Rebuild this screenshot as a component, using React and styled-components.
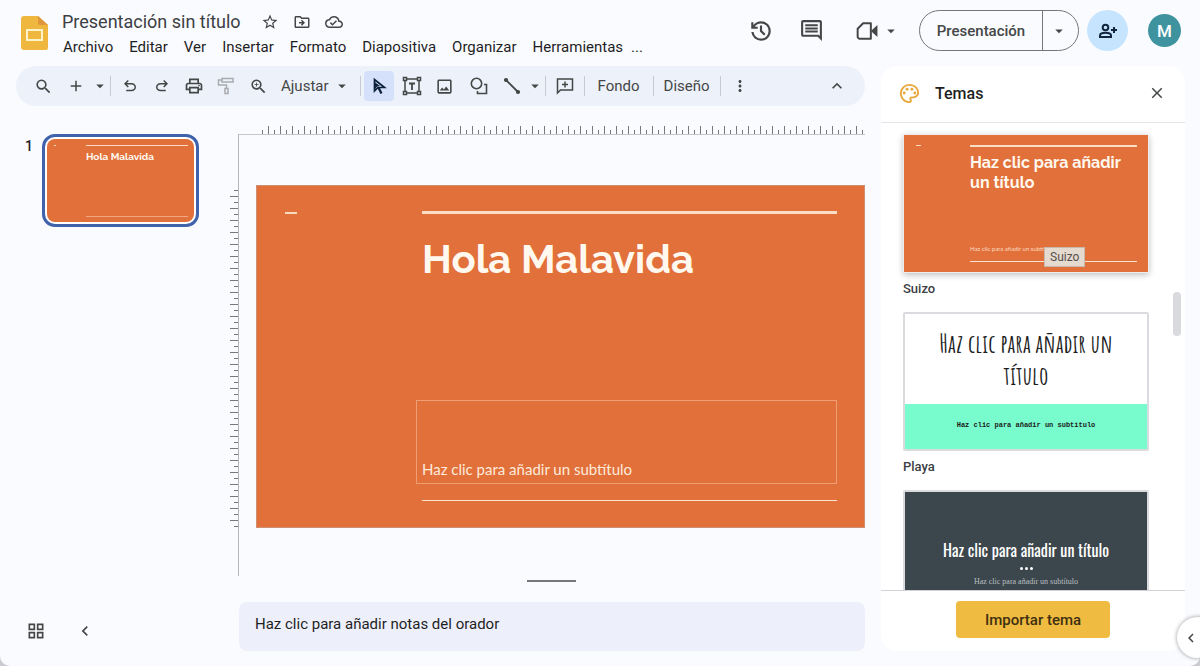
import React from 'react';
import styled, { createGlobalStyle, css } from 'styled-components';
import {
  MdSearch,
  MdAdd,
  MdArrowDropDown,
  MdOutlinePrint,
  MdZoomIn,
  MdOutlineImage,
  MdExpandLess,
  MdMoreVert,
  MdStarBorder,
  MdOutlineDriveFileMove,
  MdOutlineCloudDone,
  MdOutlineComment,
  MdOutlinePalette,
  MdClose,
  MdChevronLeft,
  MdOutlineGridView
} from 'react-icons/md';

const GlobalStyle = createGlobalStyle`
  * {
    box-sizing: border-box;
  }

  body {
    margin: 0;
    background: #c9cbd0;
    color: #1f1f1f;
    font-family: Roboto, 'Liberation Sans', sans-serif;
    overflow: hidden;
  }

  button {
    padding: 0;
    border: 0;
    background: none;
    color: inherit;
    font: inherit;
    cursor: pointer;
  }

  svg {
    display: block;
    flex: none;
  }
`;

const Window = styled.div`
  position: relative;
  height: 100vh;
  display: flex;
  flex-direction: column;
  background: #fafbff;
  border-radius: 0 0 10px 10px;
  overflow: hidden;
`;

/* header */

const Header = styled.header`
  height: 66px;
  flex: none;
  display: flex;
  justify-content: space-between;
  padding: 10px 19px 0 21px;
`;

const Brand = styled.div`
  display: flex;
  align-items: flex-start;
  gap: 14px;
`;

const Logo = styled.a`
  margin-top: 5px;
`;

const TitleRow = styled.div`
  height: 24px;
  display: flex;
  align-items: center;
`;

const DocTitle = styled.h1`
  margin: 0 20px 0 0;
  font-size: 18px;
  font-weight: 400;
  line-height: 24px;
  color: #3c4043;
`;

const TitleAction = styled.button`
  width: 18px;
  height: 18px;
  margin-right: 14px;
  display: flex;
  align-items: center;
  justify-content: center;
  color: #444746;
`;

const Menu = styled.nav`
  display: flex;
  gap: 16px;
  padding-left: 1px;
`;

const MenuItem = styled.button`
  height: 26px;
  font-size: 15px;
  white-space: nowrap;

  &:last-child {
    margin-left: -8px;
  }
`;

const HeaderTools = styled.div`
  height: 41px;
  display: flex;
  align-items: center;
`;

const HeaderIcon = styled.button`
  width: ${({ $width }) => $width || 50}px;
  height: 40px;
  margin-left: ${({ $gap }) => $gap || 0}px;
  display: flex;
  align-items: center;
  justify-content: center;
  color: #444746;
`;

const PresentGroup = styled.div`
  height: 41px;
  margin-left: 18px;
  display: flex;
  border: 1px solid #747775;
  border-radius: 21px;
  color: #444746;
`;

const PresentButton = styled.button`
  width: 122px;
  font-size: 15px;
  font-weight: 500;
`;

const PresentMore = styled.button`
  width: 36px;
  padding-right: 3px;
  display: flex;
  align-items: center;
  justify-content: center;
  border-left: 1px solid #747775;
`;

const ShareButton = styled.button`
  width: 41px;
  height: 41px;
  margin: 0 20px 0 8px;
  display: flex;
  align-items: center;
  justify-content: center;
  border-radius: 50%;
  background: #c6e4fe;
  color: #12263d;
`;

const Avatar = styled.button`
  width: 33px;
  height: 33px;
  border-radius: 50%;
  background: #3f939f;
  color: #fff;
  font-size: 17px;
  font-weight: 500;
`;

/* body */

const Body = styled.div`
  flex: 1;
  min-height: 0;
  display: flex;
  gap: 16px;
  padding: 0 15px 15px 0;
`;

const Editor = styled.main`
  flex: 1;
  min-width: 0;
  display: flex;
  flex-direction: column;
`;

const Toolbar = styled.div`
  height: 40px;
  flex: none;
  margin-left: 16px;
  padding: 0 12px 0 11px;
  display: flex;
  align-items: center;
  border-radius: 20px;
  background: #edf1fa;
  color: #444746;
`;

const ToolButton = styled.button`
  width: ${({ $wide }) => ($wide ? 34 : 32)}px;
  height: 30px;
  display: flex;
  align-items: center;
  justify-content: center;
  border-radius: 4px;
  color: ${({ $muted }) => ($muted ? '#a9abb0' : 'inherit')};

  ${({ $active }) => $active && css`
    width: 30px;
    margin-right: 2px;
    background: #d5e1fa;
    color: #0d203c;
  `}
`;

const CaretButton = styled.button`
  width: ${({ $narrow }) => ($narrow ? 14 : 16)}px;
  height: 30px;
  display: flex;
  align-items: center;
  justify-content: center;
`;

const ZoomButton = styled.button`
  height: 30px;
  padding: 0 6px 0 7px;
  display: flex;
  align-items: center;
  gap: 4px;
  font-size: 15px;
`;

const TextButton = styled.button`
  height: 30px;
  padding: 0 ${({ $pad }) => $pad}px;
  font-size: 15px;
`;

const Divider = styled.span`
  width: 1px;
  height: 20px;
  margin: 0 3px;
  background: #c7cad0;
`;

const Spacer = styled.span`
  flex: 1;
`;

const Workspace = styled.div`
  flex: 1;
  min-height: 0;
  display: flex;
`;

const Filmstrip = styled.aside`
  width: 230px;
  flex: none;
  padding: 28px 31px 0 25px;
  display: flex;
  flex-direction: column;
  justify-content: space-between;
`;

const FilmItem = styled.div`
  display: flex;
  align-items: flex-start;
  gap: 9px;
`;

const FilmNumber = styled.span`
  width: 8px;
  padding-top: 4px;
  font-size: 14px;
  line-height: 16px;
  font-weight: 500;
`;

const FilmThumb = styled.button`
  width: 157px;
  height: 93px;
  padding: 2px;
  border: 3px solid #3f62ab;
  border-radius: 13px;
  background: #fff;
  text-align: left;
`;

const FilmFooter = styled.div`
  display: flex;
  gap: 29px;
  padding: 0 0 10px 1px;
  color: #444746;
`;

const SmallButton = styled.button`
  width: 20px;
  height: 20px;
  display: flex;
  align-items: center;
  justify-content: center;
`;

const SideRuler = styled.div`
  width: 9px;
  flex: none;
  margin: 80px -1px 124px 0;
  background-image:
    linear-gradient(#77797d 1px, transparent 1px),
    linear-gradient(#77797d 1px, transparent 1px);
  background-size: 8px 12px, 4px 12px;
  background-position: 0 10px, right 4px;
  background-repeat: repeat-y;
  border-right: 1px solid #77797d;
`;

const Center = styled.div`
  flex: 1;
  min-width: 0;
  padding-top: 20px;
  display: flex;
  flex-direction: column;
`;

const TopRuler = styled.div`
  height: 9px;
  flex: none;
  margin: 0 1px 0 20px;
  background-image:
    linear-gradient(90deg, #77797d 1px, transparent 1px),
    linear-gradient(90deg, #77797d 1px, transparent 1px);
  background-size: 12px 8px, 12px 4px;
  background-position: 10px 0, 4px bottom;
  background-repeat: repeat-x;
  border-bottom: 1px solid #77797d;
`;

const Stage = styled.div`
  flex: 1;
  min-height: 0;
  margin-top: -1px;
  padding: 50px 0 0 17px;
  border-top: 1px solid #c4c6cb;
  border-left: 1px solid #b4b6bb;
`;

const HandleRow = styled.div`
  height: 26px;
  flex: none;
  display: flex;
  justify-content: center;
  padding-top: 4px;
`;

const Handle = styled.span`
  width: 49px;
  height: 2px;
  background: #747679;
`;

const Notes = styled.input`
  height: 49px;
  flex: none;
  margin-left: 1px;
  padding: 0 16px 6px;
  border: 0;
  border-radius: 8px;
  outline: none;
  background: #edf0fa;
  font: 15px Roboto, sans-serif;
  color: #1f1f1f;

  &::placeholder {
    color: #1f1f1f;
    opacity: 1;
  }
`;

/* Suizo theme slide, drawn at three sizes */

const slideSizes = {
  large: css`
    aspect-ratio: 609 / 343;
    padding: 25px 27px 26px 28px;
    grid-template-columns: 137px 1fr;
    border: 1px solid #d08f72;

    --dash: 12px;
    --bar: 3px;
    --title: 40px;
    --title-line: 48px;
    --title-gap: 21px;
  `,
  medium: css`
    height: 137px;
    padding: 10px 11px 10px 12px;
    grid-template-columns: 54px 1fr;

    --dash: 5px;
    --bar: 2px;
    --title: 16px;
    --title-line: 20px;
    --title-gap: 6px;
  `,
  small: css`
    height: 83px;
    padding: 6px 6px 5px 7px;
    grid-template-columns: 32px 1fr;
    border-radius: 8px;

    --dash: 2px;
    --bar: 1px;
    --title: 10px;
    --title-line: 14px;
    --title-gap: 4px;
  `
};

const Slide = styled.div`
  display: grid;
  background: #e2703a;
  color: #fff8ee;
  ${({ $size }) => slideSizes[$size]}
`;

const SlideDash = styled.span`
  width: var(--dash);
  height: ${({ $thick }) => ($thick ? 2 : 1)}px;
  margin-top: ${({ $thick }) => ($thick ? 1 : 0)}px;
  background: #f9d9bf;
`;

const SlideColumn = styled.div`
  display: flex;
  flex-direction: column;
`;

const SlideBar = styled.span`
  height: var(--bar);
  flex: none;
  background: #fbdcc4;
`;

const SlideTitle = styled.h2`
  margin: var(--title-gap) 0 auto;
  font-family: Raleway, Lato, sans-serif;
  font-size: var(--title);
  line-height: var(--title-line);
  font-weight: 700;
`;

const SubtitleBox = styled.div`
  height: 84px;
  margin-left: -6px;
  padding: 0 5px 4px;
  display: flex;
  align-items: flex-end;
  border: 1px solid #f09f72;
  font-family: Lato, sans-serif;
  font-size: 15px;
  line-height: 20px;
  color: #fdeadb;
`;

const SlideRule = styled.span`
  height: 1px;
  flex: none;
  margin-top: ${({ $gap }) => $gap}px;
  background: ${({ $faint }) => ($faint ? '#f0a780' : '#fbe3d0')};
`;

const SmallSubtitle = styled.p`
  margin: 0;
  font-family: Lato, sans-serif;
  font-size: 6px;
  line-height: 8px;
  color: #fbdcc4;
`;

/* themes panel */

const Panel = styled.section`
  width: 304px;
  flex: none;
  display: flex;
  flex-direction: column;
  border-radius: 16px;
  background: #fff;
`;

const PanelHeader = styled.div`
  height: 57px;
  flex: none;
  padding: 0 18px 2px 17px;
  display: flex;
  align-items: center;
  border-bottom: 1px solid #e3e4e7;
`;

const PanelTitle = styled.h2`
  flex: 1;
  margin: 0 0 0 14px;
  font-size: 16px;
  font-weight: 500;
`;

const ThemeScroll = styled.div`
  position: relative;
  flex: 1;
  min-height: 0;
  overflow: hidden;
`;

const ScrollThumb = styled.span`
  position: absolute;
  top: 169px;
  right: 4px;
  width: 8px;
  height: 44px;
  border-radius: 4px;
  background: #d9dade;
`;

const ThemeList = styled.ul`
  margin: 0;
  padding: 11px 36px 0 22px;
  list-style: none;
`;

const ThemeItem = styled.li`
  position: relative;
  height: 178px;
`;

const ThemeButton = styled.button`
  width: 100%;
  display: block;
  text-align: inherit;
`;

const ThemePreview = styled.div`
  height: 139px;
  border: ${({ $selected }) => ($selected ? '1px solid #efece9' : '2px solid #d9dbdf')};
  border-radius: 2px;
  box-shadow: ${({ $selected }) => ($selected ? '0 2px 6px rgba(0, 0, 0, 0.25)' : 'none')};
`;

const ThemeName = styled.span`
  display: block;
  padding-top: 8px;
  font-size: 13px;
  line-height: 16px;
  font-weight: 500;
  color: #3c4043;
`;

const Tooltip = styled.span`
  position: absolute;
  left: 141px;
  top: 113px;
  padding: 0 5px;
  border: 1px solid #c9b9ac;
  background: #e5dad0;
  color: #55504c;
  font-size: 12px;
  line-height: 18px;
`;

const BeachSlide = styled.div`
  height: 100%;
  display: flex;
  flex-direction: column;
  text-align: center;
  color: #1c1c1c;
`;

const BeachTitle = styled.h3`
  flex: 1;
  margin: 0;
  padding: 13px 24px 0;
  font-family: 'Amatic SC', 'Liberation Sans Narrow', 'Noto Sans', sans-serif;
  font-size: 26px;
  line-height: 32px;
  font-weight: 700;
`;

const BeachSubtitle = styled.p`
  height: 45px;
  margin: 0;
  background: #78fbcd;
  font-family: 'Liberation Mono', monospace;
  font-size: 7px;
  line-height: 43px;
  font-weight: 700;
`;

const DarkSlide = styled.div`
  height: 100%;
  padding-top: 46px;
  background: #3c474d;
  color: #fff;
  text-align: center;
`;

const DarkTitle = styled.h3`
  margin: 0;
  font-family: Oswald, 'Liberation Sans Narrow', 'Noto Sans', sans-serif;
  font-size: 16px;
  line-height: 24px;
  font-weight: 400;
`;

const Dots = styled.div`
  display: flex;
  justify-content: center;
  gap: 2px;
  padding: 5px 0;

  span {
    width: 3px;
    height: 3px;
    border-radius: 50%;
    background: #fff;
  }
`;

const DarkSubtitle = styled.p`
  margin: 0;
  font-family: 'Liberation Serif', serif;
  font-size: 8px;
  line-height: 14px;
  color: #b9bfc2;
`;

const PanelFooter = styled.div`
  height: 61px;
  flex: none;
  padding-top: 10px;
  text-align: center;
  border-top: 1px solid #d0d2d6;
`;

const ImportButton = styled.button`
  width: 154px;
  height: 37px;
  border-radius: 4px;
  background: #efbc41;
  color: #3f3010;
  font-size: 15px;
  font-weight: 500;
`;

const EdgeToggle = styled.button`
  position: absolute;
  right: -18px;
  bottom: 8px;
  width: 41px;
  height: 41px;
  padding-left: 5px;
  border-radius: 50%;
  background: #fff;
  box-shadow: 0 0 4px rgba(0, 0, 0, 0.4);
  color: #444746;
`;

function Symbol({ d, size = 20 }) {
  return (
    <svg width={size} height={size} viewBox='0 -960 960 960' fill='currentColor' aria-hidden='true'>
      <path d={d} />
    </svg>
  );
}

function Stroke({ children, size = 20, width = 2 }) {
  return (
    <svg
      width={size}
      height={size}
      viewBox='0 0 20 20'
      fill='none'
      stroke='currentColor'
      strokeWidth={width}
      aria-hidden='true'
    >
      {children}
    </svg>
  );
}

const UNDO = 'M280-200v-80h284q63 0 109.5-40T720-420q0-60-46.5-100T564-560H312l104 104-56 56-200-200 200-200 56 56-104 104h252q97 0 166.5 63T800-420q0 94-69.5 157T564-200H280Z';
const REDO = 'M396-200q-97 0-166.5-63T160-420q0-94 69.5-157T396-640h252L544-744l56-56 200 200-200 200-56-56 104-104H396q-63 0-109.5 40T240-420q0 60 46.5 100T396-280h284v80H396Z';
const HISTORY = 'M480-120q-138 0-240.5-91.5T122-440h82q14 104 92.5 172T480-200q117 0 198.5-81.5T760-480q0-117-81.5-198.5T480-760q-69 0-129 32t-101 88h110v80H120v-240h80v94q51-64 124.5-99T480-840q75 0 140.5 28.5t114 77q48.5 48.5 77 114T840-480q0 75-28.5 140.5t-77 114q-48.5 48.5-114 77T480-120Zm112-192L440-464v-216h80v184l128 128-56 56Z';

function SlidesLogo() {
  return (
    <svg width='27' height='36' viewBox='0 0 27 36' aria-hidden='true'>
      <path d='M3 1h14l10 9v23a2 2 0 0 1-2 2H3a3 3 0 0 1-3-3V4a3 3 0 0 1 3-3Z' fill='#f0b73e' />
      <path d='M17 1l10 9H19a2 2 0 0 1-2-2Z' fill='#e0953a' />
      <rect x='6' y='15' width='15' height='10' fill='none' stroke='#fff3c9' strokeWidth='2' />
    </svg>
  );
}

function PaintIcon() {
  return (
    <Stroke width={1.5}>
      <rect x='6' y='2.5' width='11' height='3.5' />
      <path d='M6 4H2.5V9H10.500V12' />
      <rect x='9' y='12.500' width='3' height='5' />
    </Stroke>
  );
}

function CursorIcon() {
  return (
    <Stroke width={1.7}>
      <path d='M5.500 3.500V15L9 11.500H15.500Z' strokeLinejoin='miter' />
      <path d='M9.500 11.500L12.500 17.500' strokeWidth='2.300' />
      <path d='M5.500 6V13.500L8.200 10.500L11 10Z' fill='currentColor' stroke='none' />
    </Stroke>
  );
}

function TextBoxIcon() {
  return (
    <Stroke width={1.5}>
      <path d='M5 3H15M5 17H15M3 5V15M17 5V15' />
      <rect x='1.500' y='1.500' width='3' height='3' />
      <rect x='15.500' y='1.500' width='3' height='3' />
      <rect x='1.500' y='15.500' width='3' height='3' />
      <rect x='15.500' y='15.500' width='3' height='3' />
      <path d='M7 7.500H13M10 7.500V14' strokeWidth='1.800' />
    </Stroke>
  );
}

function ShapeIcon() {
  return (
    <Stroke width={1.6}>
      <circle cx='7.500' cy='7.500' r='5.200' />
      <path d='M15 8.500H17.500V17.500H8.500V15' />
    </Stroke>
  );
}

function LineIcon() {
  return (
    <Stroke width={1.8}>
      <path d='M4 4L16 16' />
      <circle cx='4' cy='4' r='1.200' fill='currentColor' />
      <circle cx='16' cy='16' r='1.200' fill='currentColor' />
    </Stroke>
  );
}

function AddCommentIcon() {
  return (
    <Stroke width={1.5}>
      <path d='M2.500 17V3H17.500V14H5.500Z' />
      <path d='M10 5.500V11.500M7 8.500H13' />
    </Stroke>
  );
}

function VideoIcon() {
  return (
    <Stroke size={22} width={1.8}>
      <path d='M1.500 8L6.500 3H13.500V17H3.500A2 2 0 0 1 1.500 15Z' strokeLinejoin='round' />
      <path d='M14 9.500L19.500 4.500V15.500L14 10.500Z' fill='currentColor' stroke='none' />
    </Stroke>
  );
}

function PersonAddIcon() {
  return (
    <Stroke size={20} width={2}>
      <circle cx='7.500' cy='6.500' r='2.800' />
      <path d='M2 16V14.500C2 12.500 5 11.800 7.500 11.800S13 12.500 13 14.500V16Z' />
      <path d='M16 6V12M13 9H19' />
    </Stroke>
  );
}

const menuItems = [
  'Archivo',
  'Editar',
  'Ver',
  'Insertar',
  'Formato',
  'Diapositiva',
  'Organizar',
  'Herramientas',
  '...'
];

function AppHeader() {
  return (
    <Header>
      <Brand>
        <Logo href='#' aria-label='Inicio'>
          <SlidesLogo />
        </Logo>
        <div>
          <TitleRow>
            <DocTitle>Presentación sin título</DocTitle>
            <TitleAction aria-label='Destacar'><MdStarBorder size={18} /></TitleAction>
            <TitleAction aria-label='Mover'><MdOutlineDriveFileMove size={18} /></TitleAction>
            <TitleAction aria-label='Estado'><MdOutlineCloudDone size={18} /></TitleAction>
          </TitleRow>
          <Menu>
            {menuItems.map((item) => <MenuItem key={item}>{item}</MenuItem>)}
          </Menu>
        </div>
      </Brand>
      <HeaderTools>
        <HeaderIcon aria-label='Historial'><Symbol d={HISTORY} size={26} /></HeaderIcon>
        <HeaderIcon aria-label='Comentarios'><MdOutlineComment size={25} /></HeaderIcon>
        <HeaderIcon $width={28} $gap={17} aria-label='Videollamada'><VideoIcon /></HeaderIcon>
        <HeaderIcon $width={20} aria-label='Opciones de llamada'><MdArrowDropDown size={18} /></HeaderIcon>
        <PresentGroup>
          <PresentButton>Presentación</PresentButton>
          <PresentMore aria-label='Opciones de presentación'><MdArrowDropDown size={18} /></PresentMore>
        </PresentGroup>
        <ShareButton aria-label='Compartir'><PersonAddIcon /></ShareButton>
        <Avatar>M</Avatar>
      </HeaderTools>
    </Header>
  );
}

function EditorToolbar() {
  return (
    <Toolbar role='toolbar'>
      <ToolButton aria-label='Buscar'><MdSearch size={19} /></ToolButton>
      <ToolButton $wide aria-label='Nueva diapositiva'><MdAdd size={18} /></ToolButton>
      <CaretButton $narrow aria-label='Diseños'><MdArrowDropDown size={18} /></CaretButton>
      <Divider />
      <ToolButton aria-label='Deshacer'><Symbol d={UNDO} size={18} /></ToolButton>
      <ToolButton aria-label='Rehacer'><Symbol d={REDO} size={18} /></ToolButton>
      <ToolButton aria-label='Imprimir'><MdOutlinePrint size={20} /></ToolButton>
      <ToolButton $muted aria-label='Copiar formato'><PaintIcon /></ToolButton>
      <ToolButton aria-label='Zoom'><MdZoomIn size={19} /></ToolButton>
      <ZoomButton>
        Ajustar
        <MdArrowDropDown size={18} />
      </ZoomButton>
      <Divider />
      <ToolButton $active aria-label='Seleccionar'><CursorIcon /></ToolButton>
      <ToolButton aria-label='Cuadro de texto'><TextBoxIcon /></ToolButton>
      <ToolButton $wide aria-label='Imagen'><MdOutlineImage size={19} /></ToolButton>
      <ToolButton $wide aria-label='Forma'><ShapeIcon /></ToolButton>
      <ToolButton aria-label='Línea'><LineIcon /></ToolButton>
      <CaretButton $narrow aria-label='Tipos de línea'><MdArrowDropDown size={18} /></CaretButton>
      <Divider />
      <ToolButton aria-label='Añadir comentario'><AddCommentIcon /></ToolButton>
      <Divider />
      <TextButton $pad={10}>Fondo</TextButton>
      <Divider />
      <TextButton $pad={7}>Diseño</TextButton>
      <Divider />
      <ToolButton aria-label='Más'><MdMoreVert size={18} /></ToolButton>
      <Spacer />
      <ToolButton aria-label='Ocultar menús'><MdExpandLess size={20} /></ToolButton>
    </Toolbar>
  );
}

function ThemesPanel() {
  return (
    <Panel>
      <PanelHeader>
        <MdOutlinePalette size={23} color='#e8a93c' />
        <PanelTitle>Temas</PanelTitle>
        <SmallButton aria-label='Cerrar'><MdClose size={18} color='#444746' /></SmallButton>
      </PanelHeader>
      <ThemeScroll>
        <ThemeList>
          <ThemeItem>
            <ThemeButton>
              <ThemePreview $selected>
                <Slide $size='medium'>
                  <SlideDash />
                  <SlideColumn>
                    <SlideBar />
                    <SlideTitle>Haz clic para añadir un título</SlideTitle>
                    <SmallSubtitle>Haz clic para añadir un subtítulo</SmallSubtitle>
                    <SlideRule $gap={8} />
                  </SlideColumn>
                </Slide>
              </ThemePreview>
              <ThemeName>Suizo</ThemeName>
            </ThemeButton>
            <Tooltip role='tooltip'>Suizo</Tooltip>
          </ThemeItem>
          <ThemeItem>
            <ThemeButton>
              <ThemePreview>
                <BeachSlide>
                  <BeachTitle>Haz clic para añadir un título</BeachTitle>
                  <BeachSubtitle>Haz clic para añadir un subtítulo</BeachSubtitle>
                </BeachSlide>
              </ThemePreview>
              <ThemeName>Playa</ThemeName>
            </ThemeButton>
          </ThemeItem>
          <ThemeItem>
            <ThemeButton>
              <ThemePreview>
                <DarkSlide>
                  <DarkTitle>Haz clic para añadir un título</DarkTitle>
                  <Dots><span /><span /><span /></Dots>
                  <DarkSubtitle>Haz clic para añadir un subtítulo</DarkSubtitle>
                </DarkSlide>
              </ThemePreview>
            </ThemeButton>
          </ThemeItem>
        </ThemeList>
        <ScrollThumb />
      </ThemeScroll>
      <PanelFooter>
        <ImportButton>Importar tema</ImportButton>
      </PanelFooter>
    </Panel>
  );
}

function App() {
  return (
    <Window>
      <GlobalStyle />
      <AppHeader />
      <Body>
        <Editor>
          <EditorToolbar />
          <Workspace>
            <Filmstrip>
              <FilmItem>
                <FilmNumber>1</FilmNumber>
                <FilmThumb aria-label='Diapositiva 1'>
                  <Slide $size='small'>
                    <SlideDash />
                    <SlideColumn>
                      <SlideBar />
                      <SlideTitle>Hola Malavida</SlideTitle>
                      <SlideRule $gap={0} $faint />
                    </SlideColumn>
                  </Slide>
                </FilmThumb>
              </FilmItem>
              <FilmFooter>
                <SmallButton aria-label='Cuadrícula'><MdOutlineGridView size={20} /></SmallButton>
                <SmallButton aria-label='Ocultar tira'><MdChevronLeft size={20} /></SmallButton>
              </FilmFooter>
            </Filmstrip>
            <SideRuler />
            <Center>
              <TopRuler />
              <Stage>
                <Slide $size='large'>
                  <SlideDash $thick />
                  <SlideColumn>
                    <SlideBar />
                    <SlideTitle>Hola Malavida</SlideTitle>
                    <SubtitleBox>Haz clic para añadir un subtítulo</SubtitleBox>
                    <SlideRule $gap={16} />
                  </SlideColumn>
                </Slide>
              </Stage>
              <HandleRow><Handle /></HandleRow>
              <Notes aria-label='Notas del orador' placeholder='Haz clic para añadir notas del orador' />
            </Center>
          </Workspace>
        </Editor>
        <ThemesPanel />
      </Body>
      <EdgeToggle aria-label='Mostrar panel lateral'><MdChevronLeft size={18} /></EdgeToggle>
    </Window>
  );
}

export default App;
